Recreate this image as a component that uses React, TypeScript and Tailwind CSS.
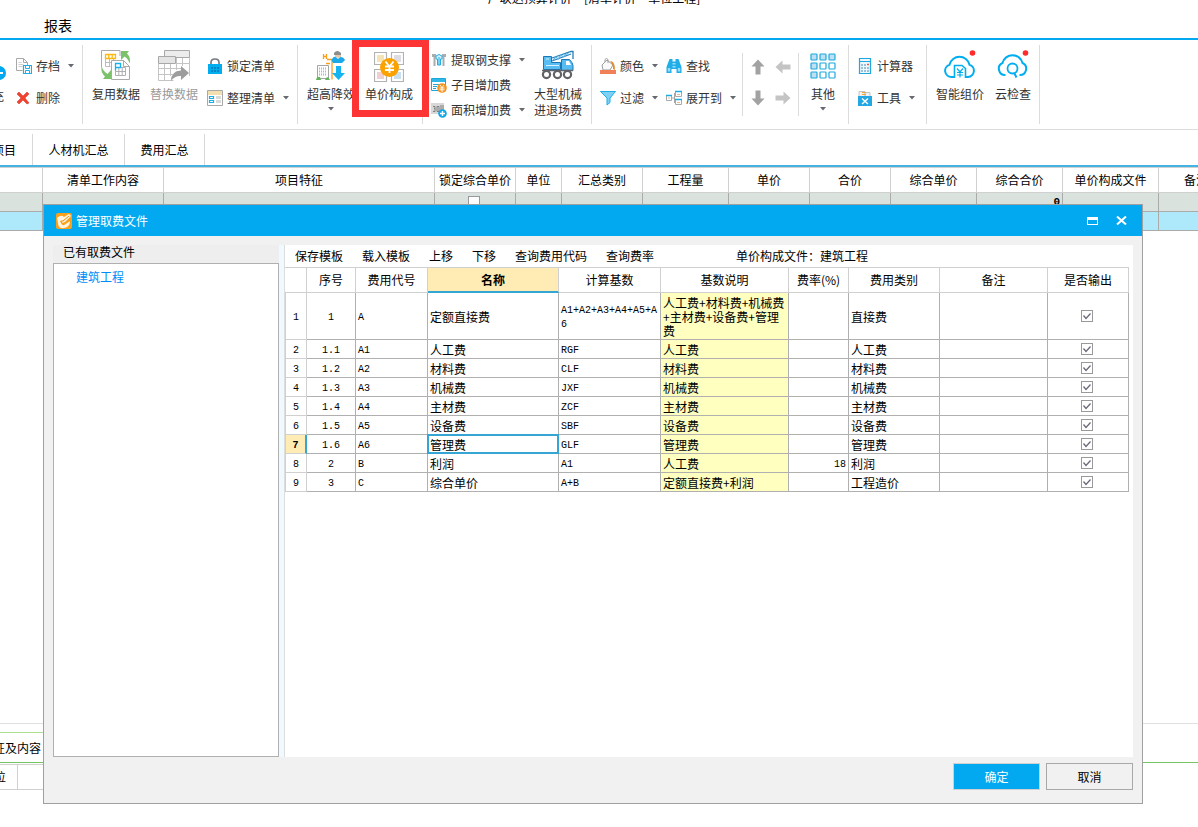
import React from 'react';
import type { ReactNode } from 'react';

/* ---------- icons ---------- */

const PlusDiscIcon = () => (
  <svg width="14" height="14" viewBox="0 0 14 14">
    <circle cx="7" cy="7" r="7" fill="#00a8f0" />
    <path d="M3 7h8" stroke="#fff" strokeWidth="2" />
  </svg>
);

const ArchiveIcon = () => (
  <svg width="16" height="16" viewBox="0 0 16 16" fill="none">
    <path d="M.5.5h7l4 4v3M.5.5v12h6M7.500.5v4h4" stroke="#a8a8a8" />
    <path d="M2.500 4.500h3M2.500 6.500h5M2.500 8.500h4" stroke="#cfcfcf" />
    <path d="M7.500 7.500h8v8h-8z" fill="#fff" stroke="#1fb0e6" strokeWidth="1.200" />
    <path d="M9.500 7.500v3h4v-3M9.500 15.500v-3h4v3" stroke="#1fb0e6" />
  </svg>
);

const DeleteIcon = () => (
  <svg width="14" height="14" viewBox="0 0 14 14">
    <path d="M1 3 3 1l4 4 4-4 2 2-4 4 4 5-2 1-4-4-4 4-2-2 4-4z" fill="#f0432f" stroke="#d8281c" strokeWidth=".5" />
  </svg>
);

const ReuseIcon = () => (
  <svg width="30" height="30" viewBox="0 0 30 30" fill="none">
    <path d="M.5 17V.5h18.500V6" stroke="#aaa" />
    <path d="M4.500 8v8.500h5M8.500 8v8M12.500 8v2M4.500 12.500h6" stroke="#bdbdbd" />
    <path d="M4.500 4.500h10v4h-10zM7.800 4.500v4M11.200 4.500v4" stroke="#fdb913" strokeWidth="1.300" />
    <path d="M10.500 10.500h12l6 6v13h-18z" fill="#fff" stroke="#aaa" />
    <path d="M22.500 10.500v6h6" stroke="#aaa" />
    <path d="M14.500 17.500v8h10v-8zM14.500 21.500h10M17.800 17v8M21.200 17v8" stroke="#b0b0b0" />
    <path d="M14.500 13.500h5v4h-5zM14.500 17v3.500" stroke="#18b3ea" strokeWidth="1.300" />
    <path d="M20 1h8l-2 2.500q4 4 2.800 10q-1.800-5-5.300-7L20 10z" fill="#7cc26a" />
    <path d="M10 29H2l2-2.500Q-.5 22 .5 16q1.800 5.500 6 8L10 20z" fill="#7cc26a" />
  </svg>
);

const ReplaceIcon = () => (
  <svg width="32" height="31" viewBox="0 0 32 31" fill="none">
    <path d="M6.500.5h25v7h-25z" fill="#ececec" stroke="#a8a8a8" />
    <path d="M.5 13.500v17h15M6.500 14v16M12.500 14v12M18.500 8v12M24.500 8v8M31.500 8v18M1 18.500h24M1 24.500h14M18 13.500h13" stroke="#c4c4c4" />
    <path d="M.5 6.500h17v7H.5z" fill="#e4e4e4" stroke="#a8a8a8" />
    <path d="M13 31q0-10 10-10.500V16l8 7-8 7v-4q-6-.5-10 5z" fill="#9d9d9d" />
  </svg>
);

const LockIcon = () => (
  <svg width="16" height="16" viewBox="0 0 16 16" fill="none">
    <path d="M4 7V4.500Q4 1 8 1t4 3.500V7" stroke="#777b86" strokeWidth="1.700" />
    <path d="M1 6h14v10H1z" fill="#00aef0" />
    <path d="M4 10h2m1 0h2m1 0h2M4 13h2m1 0h2m1 0h2" stroke="#0b5f94" />
  </svg>
);

const SortListIcon = () => (
  <svg width="16" height="16" viewBox="0 0 16 16" fill="none">
    <path d="M.5.5h15v15H.5z" fill="#fff" stroke="#a8a8a8" />
    <path d="M1 1h14v4H1z" fill="#f4dfb0" />
    <path d="M2.500 6.500h4v2h-4zM2.500 10.500h4v2h-4z" stroke="#18aee8" strokeWidth="1.200" />
    <path d="M9 6h5v3H9zM9 10h5v3H9z" fill="#d9d9d9" />
  </svg>
);

const HeightIcon = () => (
  <svg width="30" height="30" viewBox="0 0 30 30" fill="none">
    <path d="M7.500 4v5m3-5v5m-3-2.500h3M11 9.500h5v20M10 13.500h4" stroke="#f9a01b" strokeWidth="1.300" />
    <path d="M1.500 15.500h11v13h-11z" fill="#fff" stroke="#a5a5a5" />
    <path d="M3 18.500h8M3 21.500h8M3 24.500h8" stroke="#b5b5b5" strokeDasharray="1 1" strokeWidth="2" />
    <path d="M0 30q1-4 4-3l1 3zM9 30q1-3 3-3l2 3z" fill="#62b45c" />
    <path d="M18 3q3-4 7 0v2h-7z" fill="#8d8d8d" />
    <path d="M19 5h6v2q-3 2-6 0z" fill="#e4c9ae" />
    <path d="M15.500 10q2-4 4-3l2.500 2 2.500-2q3 0 4.500 3l-3 3h-9z" fill="#19a8e8" />
    <path d="M20 16h5v7h4l-6.500 7-6.500-7h4z" fill="#12b5f0" />
  </svg>
);

const PriceIcon = () => (
  <svg width="30" height="30" viewBox="0 0 30 30" fill="none">
    <path d="M.5.5h12v12H.5zM17.500.5h12v12h-12zM.5 17.500h12v12H.5zM17.500 17.500h12v12h-12z" fill="#fff" stroke="#b2b2b2" strokeWidth="1.200" />
    <path d="M3 3h7v7H3z" fill="#f3e3b5" />
    <path d="M20 3h7v7h-7z" fill="#dcdce4" />
    <path d="M3 20h7v7H3z" fill="#f0cfd2" />
    <path d="M20 20h7v7h-7z" fill="#c8dff0" />
    <circle cx="15.500" cy="15.500" r="9.500" fill="#fba100" />
    <path d="m11.500 9.500 4 5 4-5M11 14.500h9M11 18h9M15.500 14v7" stroke="#fff" strokeWidth="1.800" />
  </svg>
);

const SteelIcon = () => (
  <svg width="16" height="16" viewBox="0 0 16 16" fill="none">
    <path d="M1 2h4v3H4.500v9h-2V5H1zM11 2h4v3h-1.500v9h-2V5H11z" fill="#a9adb0" />
    <path d="M5 4q3-3 6 0v3H9.500v6h-3V7H5z" fill="#d6f1fb" stroke="#22aee2" />
    <path d="M8 5v8" stroke="#22aee2" />
  </svg>
);

const SubItemIcon = () => (
  <svg width="16" height="16" viewBox="0 0 16 16" fill="none">
    <path d="M.5 1.500h14v12H.5z" fill="#fff" stroke="#1ba7dc" />
    <path d="M1 2h13v3H1z" fill="#30b7e8" />
    <path d="M2 7.500h7M2 9.500h4M2 11.500h3" stroke="#1ba7dc" />
    <circle cx="11" cy="11" r="4.800" fill="#f7941d" />
    <path d="m9 8 2 2.500L13 8M8.500 11h5M8.500 12.800h5M11 10v5" stroke="#fff" strokeWidth=".9" />
  </svg>
);

const AreaIcon = () => (
  <svg width="16" height="16" viewBox="0 0 16 16" fill="none">
    <path d="M0 1h13v11H0z" fill="#d8d8d8" />
    <path d="M2 4.500h2v2H3m1 0v3H2M6 4.500h2v5H6zM10 3v7m2-7v5" stroke="#777" strokeWidth=".9" />
    <circle cx="11.500" cy="11.500" r="4.300" fill="#12a7e8" />
    <path d="M9 11.500h5M11.500 9v5" stroke="#fff" strokeWidth="1.400" />
  </svg>
);

const CraneIcon = () => (
  <svg width="34" height="30" viewBox="0 0 34 30" fill="none">
    <path d="M11 8 30 1.500h2V9M11 11l19-7" stroke="#287fb8" strokeWidth="1.300" />
    <path d="m12 10 3-3 2 2 3-4 2 2 4-3.500 2 1" stroke="#58b7e8" strokeWidth="1.200" />
    <path d="M2.500 6.500h8v6h9v7h-17z" fill="#58bdf2" stroke="#1c78b4" />
    <path d="M5 9h3M5 15.500h13" stroke="#d9f2ff" />
    <path d="M20.500 9.500h8q3 3 3.500 6v5H20.500z" fill="#58bdf2" stroke="#1c78b4" />
    <path d="M25 11h3l2 4h-5z" fill="#fff" />
    <path d="M1 20.500h31" stroke="#59636b" strokeWidth="1.500" />
    <g fill="#fff" stroke="#606266" strokeWidth="2.200">
      <circle cx="5.500" cy="24.500" r="3.600" />
      <circle cx="16.500" cy="24.500" r="3.600" />
      <circle cx="26.500" cy="24.500" r="3.600" />
    </g>
  </svg>
);

const BucketIcon = () => (
  <svg width="16" height="16" viewBox="0 0 16 16" fill="none">
    <path d="m2 7 5-5 6 5-3 5H3z" fill="#fafafa" stroke="#9d9d9d" />
    <path d="M5 4V1.500Q6.500-.5 8 1.500V5" stroke="#9d9d9d" />
    <path d="M10 3q5 0 5 9l-2-1q0-5-3-8z" fill="#e58a2d" />
    <path d="M0 12h16v4H0z" fill="#f08058" />
  </svg>
);

const FilterIcon = () => (
  <svg width="16" height="16" viewBox="0 0 16 16">
    <path d="M.5 1.500h15L10 8v4.500l-3 2.500V8z" fill="#7fd0f2" stroke="#1daee5" />
  </svg>
);

const BinocularsIcon = () => (
  <svg width="16" height="16" viewBox="0 0 16 16">
    <path d="M3.500 1h3v2.500h3V1h3l1.500 4 1.500 4v6h-5v-4h-5v4h-5V9L2 5z" fill="#1faee8" />
    <path d="M1.800 10h2.400v3.500H1.800zM11.800 10h2.400v3.500h-2.400zM6.500 5h3v1.500h-3zM6.500 8h3v1.500h-3z" fill="#9adcf7" />
  </svg>
);

const ExpandIcon = () => (
  <svg width="16" height="16" viewBox="0 0 16 16" fill="none">
    <path d="M6 8h2.500M8.500 3v10M8.500 3.500H10M8.500 12.500H10" stroke="#a5a5a5" />
    <path d="M.5 5.500h5v5h-5zM9.500 1.500h6v5h-6zM9.500 9.500h6v5h-6z" fill="#fff" stroke="#a8a8a8" />
    <path d="M0 5.500h6M9 1.500h7M9 9.500h7" stroke="#20ace4" strokeWidth="1.600" />
    <path d="M2 8h2M11 4.500h3M11 12.500h3" stroke="#f0b97a" />
  </svg>
);

const ArrowIcon = ({ turn, color }: { turn: string; color: string }) => (
  <svg width="16" height="16" viewBox="0 0 16 16" className={turn}>
    <path d="M8 .5 14.500 7.500H10.500v8h-5v-8h-4z" fill={color} />
  </svg>
);

const NineGridIcon = () => (
  <svg width="26" height="26" viewBox="0 0 26 26" stroke="#1aaade" strokeWidth="1.200">
    {[1, 10, 19].map((y) =>
      [1, 10, 19].map((x) => (
        <rect key={`${x}-${y}`} x={x} y={y} width="6" height="6" rx=".8" fill={x === 1 || y === 1 ? '#bfe0f2' : '#fff'} />
      )),
    )}
  </svg>
);

const CalculatorIcon = () => (
  <svg width="16" height="16" viewBox="-1 0 16 16" fill="none">
    <path d="M1.500.5h11v15h-11z" fill="#eef8fd" stroke="#1fa7de" strokeWidth="1.200" />
    <path d="M2 3.500h10" stroke="#1fa7de" />
    <path d="M3 7h2m1 0h2M3 10h2m1 0h2m1 0h2M3 13h2m1 0h2m1 0h2" stroke="#4d88b8" />
    <path d="M9 6.500h2" stroke="#e8604c" strokeWidth="1.600" />
  </svg>
);

const ToolsIcon = () => (
  <svg width="16" height="16" viewBox="-1 0 16 16" fill="none">
    <path d="M1 1.500h6v5H1zM7 2.500h5v4H7z" fill="#f2f2f2" stroke="#c4c4c4" />
    <path d="M4 2.500h4M4 4.500h4" stroke="#f0a83c" />
    <path d="M0 6h14v10H0z" fill="#22a7e2" />
    <path d="m4 8.500 6 5.500M10 8.500 4 14" stroke="#fff" strokeWidth="1.400" />
  </svg>
);

const CloudPriceIcon = () => (
  <svg width="32" height="30" viewBox="0 0 32 30" fill="none">
    <path d="M10 27H7.500A6.300 6.300 0 0 1 5.500 14.700 10.300 10.300 0 0 1 25.500 14.700 6.300 6.300 0 0 1 24 27h-2" stroke="#00aeef" strokeWidth="2" />
    <path d="M10.500 28V15.500h7.500l3.500 3V28" stroke="#00aeef" strokeWidth="1.600" />
    <path d="m13 18.500 3 3.500 3-3.500M13 22.500h6M13 25h6M16 22v5.500" stroke="#00aeef" strokeWidth="1.200" />
    <circle cx="28.500" cy="3" r="2.800" fill="#ff2a2a" />
  </svg>
);

const CloudCheckIcon = () => (
  <svg width="32" height="30" viewBox="0 0 32 30" fill="none">
    <path d="M8.500 25A6.300 6.300 0 0 1 5.500 13 10.300 10.300 0 0 1 25.500 13 6.300 6.300 0 0 1 22.500 25" stroke="#00aeef" strokeWidth="2" />
    <circle cx="15.500" cy="18.500" r="5" stroke="#00aeef" strokeWidth="1.800" />
    <path d="m17.500 23.500 2 4" stroke="#00aeef" strokeWidth="2" />
    <circle cx="28.500" cy="3" r="2.800" fill="#ff2a2a" />
  </svg>
);

const AppIcon = () => (
  <svg width="16" height="16" viewBox="0 0 16 16" fill="none">
    <rect width="16" height="16" rx="2" fill="#f9a11b" />
    <path d="M1 5q4-4 7-1l5-3 2 2-6 6-3 1 1-3-3 1q2 5 4 4t6-4q0 6-6 7T2 10z" fill="#fff4df" />
    <path d="m7 8 6-5" stroke="#e88a10" />
  </svg>
);

const Caret = () => (
  <svg width="6" height="4" viewBox="0 0 6 4" className="shrink-0">
    <path d="M0 0h6L3 3.500z" fill="#666a70" />
  </svg>
);

/* ---------- ribbon pieces ---------- */

const Group = ({ className, children }: { className: string; children?: ReactNode }) => (
  <div className={`flex shrink-0 border-r border-[#dcdcdc] ${className}`}>{children}</div>
);

type SmallProps = { icon: ReactNode; label: string; caret?: boolean; className?: string };

const SmallButton = ({ icon, label, caret, className = 'h-8' }: SmallProps) => (
  <button type="button" className={`flex items-center ${className}`}>
    <span className="flex w-5 shrink-0">{icon}</span>
    <span className="leading-4">{label}</span>
    {caret && (
      <span className="ml-2">
        <Caret />
      </span>
    )}
  </button>
);

type BigProps = { icon: ReactNode; lines: string[]; caret?: boolean; className?: string; width?: string };

const BigButton = ({ icon, lines, caret, className = '', width = 'w-[58px]' }: BigProps) => (
  <button type="button" className={`flex shrink-0 flex-col items-center whitespace-nowrap pt-[5px] ${width} ${className}`}>
    <span className="mb-1 flex h-8 items-start justify-center">{icon}</span>
    {lines.map((l) => (
      <span key={l} className="leading-4">
        {l}
      </span>
    ))}
    {caret && (
      <span className="mt-[5px] flex">
        <Caret />
      </span>
    )}
  </button>
);

const Ribbon = () => (
  <div className="flex h-[90px] border-b border-[#dcdcdc] pt-[5px] text-[#333]">
    <div className="flex h-[79px]">
      <Group className="w-[83px]">
        <button type="button" className="-ml-2.5 flex w-4 shrink-0 flex-col items-end overflow-hidden whitespace-nowrap pr-0.5 pt-[21px]">
          <span className="-mr-0.5">
            <PlusDiscIcon />
          </span>
          <span className="mt-2 leading-4">补充</span>
        </button>
        <div className="flex shrink-0 flex-col pl-2.5 pt-[5px]">
          <SmallButton icon={<ArchiveIcon />} label="存档" caret />
          <SmallButton icon={<DeleteIcon />} label="删除" />
        </div>
      </Group>
      <Group className="w-[215px] pl-1">
        <BigButton icon={<ReuseIcon />} lines={['复用数据']} />
        <BigButton icon={<ReplaceIcon />} lines={['替换数据']} className="text-[#9a9a9a]" />
        <div className="flex flex-col pl-1 pt-[5px]">
          <SmallButton icon={<LockIcon />} label="锁定清单" />
          <SmallButton icon={<SortListIcon />} label="整理清单" caret />
        </div>
      </Group>
      <Group className="w-[125px] pl-1">
        <BigButton icon={<HeightIcon />} lines={['超高降效']} caret />
        <div className="relative flex">
          <BigButton icon={<span className="pt-0.5"><PriceIcon /></span>} lines={['单价构成']} />
          <div className="pointer-events-none absolute -left-2 -right-[11px] -top-[5px] h-[77px] border-[7px] border-[#fd3535]" />
        </div>
      </Group>
      <Group className="w-[169px] pl-2">
        <div className="flex w-[98px] flex-col pt-0.5">
          <SmallButton className="h-[25px]" icon={<SteelIcon />} label="提取钢支撑" caret />
          <SmallButton className="h-[25px]" icon={<SubItemIcon />} label="子目增加费" />
          <SmallButton className="h-[25px]" icon={<AreaIcon />} label="面积增加费" caret />
        </div>
        <BigButton icon={<CraneIcon />} lines={['大型机械', '进退场费']} />
      </Group>
      <Group className="w-[257px] pl-2">
        <div className="flex w-[66px] flex-col pt-[5px]">
          <SmallButton icon={<BucketIcon />} label="颜色" caret />
          <SmallButton icon={<FilterIcon />} label="过滤" caret />
        </div>
        <div className="flex flex-col pt-[5px]">
          <SmallButton icon={<BinocularsIcon />} label="查找" />
          <SmallButton icon={<ExpandIcon />} label="展开到" caret />
        </div>
        <div className="my-2 ml-1.5 grid w-[57px] shrink-0 grid-cols-2 grid-rows-[27px_36px] place-items-center border-x border-[#dcdcdc] px-0.5">
          <button type="button" aria-label="上移"><ArrowIcon turn="" color="#a2a2a2" /></button>
          <button type="button" aria-label="左移"><ArrowIcon turn="-rotate-90" color="#c4c4c4" /></button>
          <button type="button" aria-label="下移"><ArrowIcon turn="rotate-180" color="#a2a2a2" /></button>
          <button type="button" aria-label="右移"><ArrowIcon turn="rotate-90" color="#c4c4c4" /></button>
        </div>
        <BigButton icon={<span className="pt-[3px]"><NineGridIcon /></span>} lines={['其他']} caret width="w-12" />
      </Group>
      <Group className="w-[78px] pl-2">
        <div className="flex flex-col pt-[5px]">
          <SmallButton icon={<CalculatorIcon />} label="计算器" />
          <SmallButton icon={<ToolsIcon />} label="工具" caret />
        </div>
      </Group>
      <Group className="w-[113px] pl-1">
        <BigButton icon={<CloudPriceIcon />} lines={['智能组价']} />
        <BigButton icon={<CloudCheckIcon />} lines={['云检查']} width="w-12" />
      </Group>
    </div>
  </div>
);

/* ---------- background grid ---------- */

const backColumns = [
  { w: 'w-[43px]', label: '' },
  { w: 'w-[121px]', label: '清单工作内容' },
  { w: 'w-[271px]', label: '项目特征' },
  { w: 'w-[81px]', label: '锁定综合单价' },
  { w: 'w-[46px]', label: '单位' },
  { w: 'w-[81px]', label: '汇总类别' },
  { w: 'w-[86px]', label: '工程量' },
  { w: 'w-[81px]', label: '单价' },
  { w: 'w-[81px]', label: '合价' },
  { w: 'w-[86px]', label: '综合单价' },
  { w: 'w-[86px]', label: '综合合价' },
  { w: 'w-[96px]', label: '单价构成文件' },
  { w: 'w-[75px]', label: '备注' },
];

const BackGrid = () => (
  <table className="w-[1234px] table-fixed border-separate border-spacing-0 border-t border-[#d0d0d0] text-black">
    <thead>
      <tr className="h-[25px]">
        {backColumns.map((c, i) => (
          <th key={i} className={`${c.w} whitespace-nowrap border-b border-r border-[#d0d0d0] p-0 text-center font-normal leading-4`}>
            {c.label}
          </th>
        ))}
      </tr>
    </thead>
    <tbody>
      <tr className="h-[19px] bg-[#d9e2dd]">
        {backColumns.map((c, i) => (
          <td key={i} className="h-[19px] border-b border-r border-[#aaa] p-0 pr-0.5 align-top leading-4">
            {c.label === '锁定综合单价' && (
              <input type="checkbox" aria-label="锁定综合单价" className="mx-auto mt-[3px] block size-3 appearance-none border border-[#999] bg-white" />
            )}
            {c.label === '综合合价' && <div className="text-right font-['Liberation_Mono',monospace] text-[11px] font-bold leading-[18px]">0</div>}
          </td>
        ))}
      </tr>
      <tr className="h-[19px] bg-[#ade8fb]">
        {backColumns.map((_, i) => (
          <td key={i} className="border-b border-r border-[#aaa] p-0" />
        ))}
      </tr>
    </tbody>
  </table>
);

/* ---------- dialog ---------- */

const feeColumns = [
  { w: 'w-[22px]', label: '' },
  { w: 'w-[49px]', label: '序号' },
  { w: 'w-[72px]', label: '费用代号' },
  { w: 'w-[131px]', label: '名称' },
  { w: 'w-[102px]', label: '计算基数' },
  { w: 'w-[128px]', label: '基数说明' },
  { w: 'w-[60px]', label: '费率(%)' },
  { w: 'w-[91px]', label: '费用类别' },
  { w: 'w-[108px]', label: '备注' },
  { w: 'w-[81px]', label: '是否输出' },
];

type Fee = { no: string; code: string; name: string; base: string; desc: string; rate?: string; kind: string };

const fees: Fee[] = [
  { no: '1', code: 'A', name: '定额直接费', base: 'A1+A2+A3+A4+A5+A6', desc: '人工费+材料费+机械费+主材费+设备费+管理费', kind: '直接费' },
  { no: '1.1', code: 'A1', name: '人工费', base: 'RGF', desc: '人工费', kind: '人工费' },
  { no: '1.2', code: 'A2', name: '材料费', base: 'CLF', desc: '材料费', kind: '材料费' },
  { no: '1.3', code: 'A3', name: '机械费', base: 'JXF', desc: '机械费', kind: '机械费' },
  { no: '1.4', code: 'A4', name: '主材费', base: 'ZCF', desc: '主材费', kind: '主材费' },
  { no: '1.5', code: 'A5', name: '设备费', base: 'SBF', desc: '设备费', kind: '设备费' },
  { no: '1.6', code: 'A6', name: '管理费', base: 'GLF', desc: '管理费', kind: '管理费' },
  { no: '2', code: 'B', name: '利润', base: 'A1', desc: '人工费', rate: '18', kind: '利润' },
  { no: '3', code: 'C', name: '综合单价', base: 'A+B', desc: '定额直接费+利润', kind: '工程造价' },
];

const rule = 'border-b border-r border-[#b0b0b0]';
const cell = `${rule} px-0.5 pb-0 pt-0.5 break-all`;
const codeCell = `${rule} px-0.5 pb-0 pt-[3px] break-all font-['Liberation_Mono',monospace] text-[10px]`;
const SELECTED = 6;

const FeeTable = () => (
  <table className="w-[844px] table-fixed border-separate border-spacing-0 leading-[14px] text-black">
    <thead>
      <tr className="h-[26px]">
        {feeColumns.map((c, i) => (
          <th
            key={i}
            className={`${c.w} h-[26px] whitespace-nowrap border-r border-t border-[#d0d0d0] p-0 text-center ${
              c.label === '名称' ? 'border-b-2 border-b-[#35a6d3] bg-[#ffecb4] font-bold' : 'border-b font-normal'
            }`}
          >
            {c.label}
          </th>
        ))}
      </tr>
    </thead>
    <tbody>
      {fees.map((f, i) => (
        <tr key={f.no} className={i === 0 ? 'h-[47px]' : 'h-[19px]'}>
          <th
            scope="row"
            className={`border-b border-l border-[#d0d0d0] px-0 pb-0 pt-[3px] text-center font-['Liberation_Mono',monospace] text-[10px] ${
              i === SELECTED ? 'border-r-2 border-r-[#35a6d3] bg-[#ffecb4] font-bold' : 'border-r font-normal'
            }`}
          >
            {i + 1}
          </th>
          <td className={`${codeCell} text-center`}>{f.no}</td>
          <td className={codeCell}>{f.code}</td>
          <td className={`${cell} relative`}>
            {f.name}
            {i === SELECTED && <span className="pointer-events-none absolute -inset-px border-2 border-[#35a6d3]" />}
          </td>
          <td className={codeCell}>{f.base}</td>
          <td className={`${cell} bg-[#ffffc0]`}>{f.desc}</td>
          <td className={`${codeCell} text-right`}>{f.rate}</td>
          <td className={cell}>{f.kind}</td>
          <td className={cell} />
          <td className={`${rule} py-0 pl-0 pr-0.5`}>
            <label className="relative mx-auto block size-3">
              <input type="checkbox" defaultChecked aria-label={`${f.name}是否输出`} className="peer block size-3 appearance-none border border-[#999] bg-white" />
              <svg viewBox="0 0 12 12" className="pointer-events-none absolute inset-0 hidden size-3 peer-checked:block" fill="none">
                <path d="m2.500 5.500 2.500 3 4.500-5" stroke="#6a6a78" strokeWidth="1.300" />
              </svg>
            </label>
          </td>
        </tr>
      ))}
    </tbody>
  </table>
);

const Dialog = () => (
  <section
    role="dialog"
    aria-labelledby="fee-title"
    className="absolute bottom-[23px] left-[43px] right-[55px] top-[204px] flex flex-col border border-[#a0a0a0] bg-[#f1f1f1] text-black"
  >
    <header className="flex h-[31px] shrink-0 items-center bg-[#02a9f1] pl-3 pr-[15px] text-white">
      <AppIcon />
      <h2 id="fee-title" className="ml-1 flex-1 leading-4">管理取费文件</h2>
      <button type="button" aria-label="最大化" className="mr-[18px]">
        <svg width="11" height="8" viewBox="0 0 11 8">
          <path d="M0 0h11v8H0zM1 3v4h9V3z" fill="#fff" fillRule="evenodd" />
        </svg>
      </button>
      <button type="button" aria-label="关闭">
        <svg width="11" height="9" viewBox="0 0 11 9">
          <path d="m1 .5 9 8M10 .5l-9 8" stroke="#fff" strokeWidth="2" />
        </svg>
      </button>
    </header>

    <div className="flex min-h-0 flex-1 px-[9px] pt-[9px]">
      <aside className="flex w-[226px] shrink-0 flex-col">
        <h3 className="h-[18px] shrink-0 bg-[#eee] pl-2.5 leading-[14px]">已有取费文件</h3>
        <ul className="flex-1 border border-[#b0b0b0] bg-white pl-[22px] pt-[5px] text-[#008cf8]">
          <li>
            <a href="#building" className="leading-4">建筑工程</a>
          </li>
        </ul>
      </aside>
      <div className="w-[5px] shrink-0 bg-[#effaff]" />
      <main className="min-w-0 flex-1 overflow-hidden border-l border-[#ddd] bg-white">
        <div className="flex h-[22px] items-center whitespace-nowrap pl-2.5 leading-4">
          <div className="flex gap-[19px]">
            <button type="button">保存模板</button>
            <button type="button">载入模板</button>
            <button type="button">上移</button>
            <button type="button">下移</button>
            <button type="button">查询费用代码</button>
            <button type="button">查询费率</button>
          </div>
          <p className="ml-[82px]">单价构成文件：建筑工程</p>
        </div>
        <FeeTable />
      </main>
    </div>

    <footer className="flex h-[46px] shrink-0 justify-end gap-1.5 px-[9px] pt-1.5">
      <button type="button" className="h-[27px] w-[87px] border border-[#d0d0d0] bg-[#02a9f1] text-white">确定</button>
      <button type="button" className="h-[27px] w-[87px] border border-[#a8a8a8]">取消</button>
    </footer>
  </section>
);

/* ---------- page ---------- */

export default function App() {
  return (
    <div className="relative flex min-h-screen flex-col overflow-hidden bg-white font-['Noto_Sans_CJK_SC',sans-serif] text-xs">
      <h1 className="flex h-1.5 items-end justify-center overflow-hidden whitespace-pre pr-2.5 leading-4 text-black">
        广联达预算计价 -  [清单计价 -  单位工程]
      </h1>
      <nav className="flex h-[34px] items-center border-b-2 border-[#02a9f1] pl-11 pt-1.5 text-sm text-black">
        <a href="#report" className="leading-4">报表</a>
      </nav>
      <Ribbon />
      <nav className="flex h-[37px] shrink-0 border-b-2 border-[#44b4e2] pt-1 text-black">
        <a href="#items" className="flex w-[33px] items-center justify-end overflow-hidden whitespace-nowrap border-r border-[#d8d8d8] pr-4">措施项目</a>
        <a href="#resources" className="flex w-[92px] items-center justify-center border-r border-[#d8d8d8]">人材机汇总</a>
        <a href="#fees" className="flex w-20 items-center justify-center border-r border-[#d8d8d8]">费用汇总</a>
      </nav>
      <div className="flex-1 overflow-hidden">
        <BackGrid />
      </div>
      <div className="h-[104px] border-t border-[#e0e0e0] pt-2 text-black">
        <div className="flex h-[31px] border-b border-[#77c464]">
          <div className="flex w-[43px] items-center justify-end overflow-hidden whitespace-nowrap border-t border-[#a8e090] pr-0.5">特征及内容</div>
        </div>
        <div className="mt-px flex h-[26px] w-[43px] border-y border-[#d0d0d0]">
          <div className="flex w-[18px] items-center justify-end overflow-hidden whitespace-nowrap border-r border-[#d0d0d0] pr-[11px]">单位</div>
        </div>
      </div>
      <Dialog />
    </div>
  );
}
